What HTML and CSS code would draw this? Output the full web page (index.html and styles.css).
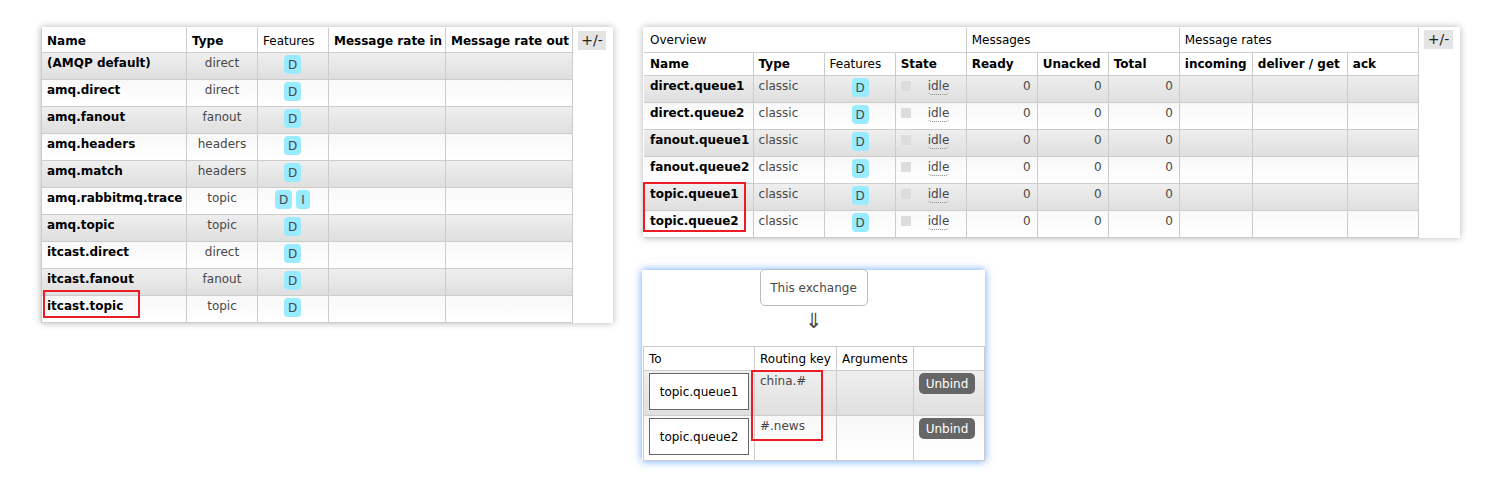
FILE: index.html
```html
<!DOCTYPE html>
<html lang="en">
<head>
    <meta charset="UTF-8">
    <title>RabbitMQ exchanges and queues</title>
    <link rel="stylesheet" href="styles.css">
</head>
<body>
    <div class="page">
        <div class="panel exchanges">
            <table class="list">
                <colgroup>
                    <col class="c145"><col class="c71"><col class="c71"><col class="c117"><col class="c127">
                </colgroup>
                <tr class="head">
                    <th class="strong">Name</th><th class="strong">Type</th><th>Features</th><th class="strong">Message rate in</th><th class="strong">Message rate out</th>
                </tr>
                <tr class="alt1"><td class="name">(AMQP default)</td><td class="mid">direct</td><td class="mid"><span class="tag">D</span></td><td></td><td></td></tr>
                <tr class="alt2"><td class="name">amq.direct</td><td class="mid">direct</td><td class="mid"><span class="tag">D</span></td><td></td><td></td></tr>
                <tr class="alt1"><td class="name">amq.fanout</td><td class="mid">fanout</td><td class="mid"><span class="tag">D</span></td><td></td><td></td></tr>
                <tr class="alt2"><td class="name">amq.headers</td><td class="mid">headers</td><td class="mid"><span class="tag">D</span></td><td></td><td></td></tr>
                <tr class="alt1"><td class="name">amq.match</td><td class="mid">headers</td><td class="mid"><span class="tag">D</span></td><td></td><td></td></tr>
                <tr class="alt2"><td class="name">amq.rabbitmq.trace</td><td class="mid">topic</td><td class="mid"><span class="tag">D</span> <span class="tag narrow">I</span></td><td></td><td></td></tr>
                <tr class="alt1"><td class="name">amq.topic</td><td class="mid">topic</td><td class="mid"><span class="tag">D</span></td><td></td><td></td></tr>
                <tr class="alt2"><td class="name">itcast.direct</td><td class="mid">direct</td><td class="mid"><span class="tag">D</span></td><td></td><td></td></tr>
                <tr class="alt1"><td class="name">itcast.fanout</td><td class="mid">fanout</td><td class="mid"><span class="tag">D</span></td><td></td><td></td></tr>
                <tr class="alt2"><td class="name">itcast.topic</td><td class="mid">topic</td><td class="mid"><span class="tag">D</span></td><td></td><td></td></tr>
            </table>
            <div class="toggle">+/-</div>
            <div class="mark mark-exchange"></div>
        </div>

        <div class="right">
            <div class="panel queues">
                <table class="list">
                    <colgroup>
                        <col class="c109"><col class="c71"><col class="c71"><col class="c71"><col class="c71"><col class="c71"><col class="c71"><col class="c73"><col class="c95"><col class="c71">
                    </colgroup>
                    <tr class="group">
                        <th colspan="4">Overview</th><th colspan="3">Messages</th><th colspan="3">Message rates</th>
                    </tr>
                    <tr class="sub">
                        <th class="strong">Name</th><th class="strong">Type</th><th>Features</th><th class="strong">State</th><th class="strong">Ready</th><th class="strong">Unacked</th><th class="strong">Total</th><th class="strong">incoming</th><th class="strong">deliver / get</th><th class="strong">ack</th>
                    </tr>
                    <tr class="alt1"><td class="name">direct.queue1</td><td>classic</td><td class="mid"><span class="tag">D</span></td><td><span class="state"><i class="dot"></i><abbr>idle</abbr></span></td><td class="num">0</td><td class="num">0</td><td class="num">0</td><td></td><td></td><td></td></tr>
                    <tr class="alt2"><td class="name">direct.queue2</td><td>classic</td><td class="mid"><span class="tag">D</span></td><td><span class="state"><i class="dot"></i><abbr>idle</abbr></span></td><td class="num">0</td><td class="num">0</td><td class="num">0</td><td></td><td></td><td></td></tr>
                    <tr class="alt1"><td class="name">fanout.queue1</td><td>classic</td><td class="mid"><span class="tag">D</span></td><td><span class="state"><i class="dot"></i><abbr>idle</abbr></span></td><td class="num">0</td><td class="num">0</td><td class="num">0</td><td></td><td></td><td></td></tr>
                    <tr class="alt2"><td class="name">fanout.queue2</td><td>classic</td><td class="mid"><span class="tag">D</span></td><td><span class="state"><i class="dot"></i><abbr>idle</abbr></span></td><td class="num">0</td><td class="num">0</td><td class="num">0</td><td></td><td></td><td></td></tr>
                    <tr class="alt1"><td class="name">topic.queue1</td><td>classic</td><td class="mid"><span class="tag">D</span></td><td><span class="state"><i class="dot"></i><abbr>idle</abbr></span></td><td class="num">0</td><td class="num">0</td><td class="num">0</td><td></td><td></td><td></td></tr>
                    <tr class="alt2"><td class="name">topic.queue2</td><td>classic</td><td class="mid"><span class="tag">D</span></td><td><span class="state"><i class="dot"></i><abbr>idle</abbr></span></td><td class="num">0</td><td class="num">0</td><td class="num">0</td><td></td><td></td><td></td></tr>
                </table>
                <div class="toggle">+/-</div>
                <div class="mark mark-queues"></div>
            </div>

            <div class="panel bindings">
                <div class="source">This exchange</div>
                <div class="arrow">&#8659;</div>
                <table class="list">
                    <colgroup>
                        <col class="c111"><col class="c82"><col class="c77"><col class="c71">
                    </colgroup>
                    <tr class="head boxed">
                        <th>To</th><th>Routing key</th><th>Arguments</th><th></th>
                    </tr>
                    <tr class="alt1 tall"><td class="boxcell"><div class="queue-box">topic.queue1</div></td><td>china.#</td><td></td><td class="action"><span class="unbind">Unbind</span></td></tr>
                    <tr class="alt2 tall"><td class="boxcell"><div class="queue-box">topic.queue2</div></td><td>#.news</td><td></td><td class="action"><span class="unbind">Unbind</span></td></tr>
                </table>
                <div class="mark mark-keys"></div>
            </div>
        </div>
    </div>
</body>
</html>
```

FILE: styles.css
```css
body {
    margin: 0;
    background: #fff;
    font-family: "DejaVu Sans", Verdana, sans-serif;
    font-size: 12px;
    color: #484848;
}
.page {
    display: flex;
    align-items: flex-start;
    gap: 29px;
    padding: 27px 0 32px 41px;
}
.right {
    display: flex;
    flex-direction: column;
    align-items: flex-start;
    gap: 32px;
}
.panel {
    position: relative;
    background: #fff;
    box-shadow: 0 0 7px rgba(0, 0, 0, 0.3);
}
.exchanges {
    display: flex;
    width: 572px;
    height: 296px;
    padding-top: 1px;
    box-sizing: border-box;
}
.queues {
    display: flex;
    width: 817px;
    height: 211px;
    margin-left: 1px;
    padding-top: 1px;
    box-sizing: border-box;
}
.bindings {
    width: 343px;
    height: 191px;
    box-shadow: 0 0 8px rgba(60, 140, 255, 0.8);
}

/* tables */
.list {
    border-collapse: collapse;
    table-layout: fixed;
    flex: none;
    align-self: flex-start;
}
.list th, .list td {
    border: 1px solid #ccc;
    padding: 2px 5px 3px;
    text-align: left;
    vertical-align: top;
    line-height: 17px;
    white-space: nowrap;
    overflow: hidden;
}
.list th {
    font-weight: normal;
    color: #000;
    padding: 3px 5px 2px;
}
.list .head th { padding: 4px 5px 2px; }
.list .group th { padding: 4px 5px 2px; }
.exchanges .list .head th { padding: 5px 5px 1px; }
.exchanges .list { width: 532px; }
.queues .list { width: 775px; margin-left: 1px; }
.bindings .list { width: 342px; margin-left: 1px; }
.list tr:first-child th { border-top: none; }
.queues .list th:first-child, .queues .list td:first-child { border-left: none; padding-left: 6px; }
.bindings .list tr:first-child th { border-top: 1px solid #ccc; }

.c145 { width: 145px; }
.c127 { width: 127px; }
.c117 { width: 117px; }
.c111 { width: 111px; }
.c109 { width: 109px; }
.c95 { width: 95px; }
.c82 { width: 82px; }
.c77 { width: 77px; }
.c73 { width: 73px; }
.c71 { width: 71px; }

.head { height: 24px; }
.group { height: 24px; }
.sub { height: 23px; }
.alt1, .alt2 { height: 27px; }
.tall { height: 45px; }
.alt1 { background: linear-gradient(to bottom, #efefef 0%, #dfdfdf 100%); }
.alt2 { background: linear-gradient(to bottom, #f8f8f8 0%, #fff 100%); }

.list th.strong, .list td.name {
    font-weight: bold;
    color: #000;
}
.list td.mid { text-align: center; }
.list td.num { text-align: right; padding-right: 6px; }

.tag {
    display: inline-block;
    width: 17px;
    height: 19px;
    line-height: 21px;
    text-align: center;
    border-radius: 4px;
    background: #99ebff;
}
.tag.narrow { width: 14px; }
.exchanges .tag:first-child { margin-left: -1px; }
.queues .tag { margin-left: 1px; }
.state {
    display: flex;
    align-items: flex-start;
}
.dot {
    width: 10px;
    height: 10px;
    margin-top: 3px;
    margin-right: 17px;
    background: #ddd;
}
.state abbr {
    height: 16px;
    border-bottom: 1px dotted #888;
    border-radius: 0 0 4px 4px;
}

.toggle {
    align-self: flex-start;
    width: 28px;
    height: 19px;
    margin: 3px 0 0 5px;
    background: #e4e4e4;
    color: #222;
    font-size: 14px;
    line-height: 19px;
    text-align: center;
}
.queues .toggle { width: 29px; margin-top: 2px; }

/* bindings panel */
.source {
    width: 108px;
    height: 37px;
    margin: -1px auto 0;
    box-sizing: border-box;
    border: 1px solid #bbb;
    border-radius: 5px;
    line-height: 37px;
    text-align: center;
    background: #fff;
}
.arrow {
    height: 40px;
    font-size: 21px;
    line-height: 30px;
    text-align: center;
}
.list td.boxcell { padding: 2px 5px; }
.queue-box {
    height: 37px;
    box-sizing: border-box;
    border: 1px solid #666;
    background: #fff;
    color: #000;
    line-height: 37px;
    text-align: center;
}
.list td.action { padding: 2px 5px; }
.unbind {
    display: block;
    width: 56px;
    height: 21px;
    border-radius: 5px;
    background: #666;
    color: #fff;
    font-size: 12px;
    line-height: 23px;
    text-align: center;
}

/* red highlight boxes drawn over the tables */
.mark {
    position: absolute;
    box-sizing: border-box;
    border: 2px solid #ed1c24;
}
.mark-exchange { left: 2px; top: 263px; width: 97px; height: 28px; }
.mark-queues { left: 0; top: 155px; width: 103px; height: 50px; }
.mark-keys { left: 109px; top: 100px; width: 72px; height: 71px; }
```
